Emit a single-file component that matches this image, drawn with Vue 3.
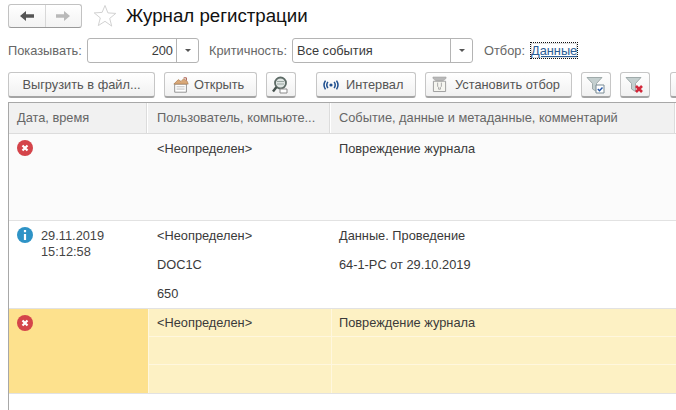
<script setup>
const rows = [
  { kind: 'err', date: [], user: ['<Неопределен>', '', ''], event: ['Повреждение журнала', '', ''] },
  { kind: 'info', date: ['29.11.2019', '15:12:58'], user: ['<Неопределен>', 'DOC1C', '650'], event: ['Данные. Проведение', '64-1-PC от 29.10.2019', ''] },
  { kind: 'err', selected: true, date: [], user: ['<Неопределен>', '', ''], event: ['Повреждение журнала', '', ''] }
]
</script>

<template>
  <div class="page">
    <header class="titlebar">
      <div class="nav">
        <button class="nav-btn">
          <svg width="16" height="12" viewBox="0 0 16 12"><path d="M1 6l6-5v3.2h8v3.6H7V11z" fill="#555"/></svg>
        </button>
        <button class="nav-btn">
          <svg width="16" height="12" viewBox="0 0 16 12"><path d="M15 6L9 1v3.2H1v3.6h8V11z" fill="#b9b9b9"/></svg>
        </button>
      </div>
      <svg class="star" width="24" height="24" viewBox="0 0 24 24"><path d="M12 1.500l2.900 7.400 7.900.5-6.100 5 2 7.700L12 17.300l-6.700 4.300 2-7.700-6.100-5 7.900-.5z" fill="#fff" stroke="#d2d2d2"/></svg>
      <h1 class="title">Журнал регистрации</h1>
    </header>

    <div class="filters">
      <span class="lbl lbl-show">Показывать:</span>
      <div class="combo combo-count">
        <span class="val right">200</span>
        <span class="drop"><i class="caret"></i></span>
      </div>
      <span class="lbl crit">Критичность:</span>
      <div class="combo combo-crit">
        <span class="val">Все события</span>
        <span class="drop"><i class="caret"></i></span>
      </div>
      <span class="lbl sel">Отбор:</span>
      <a class="link">Данные</a>
    </div>

    <div class="toolbar">
      <button class="btn w-export">Выгрузить в файл...</button>
      <button class="btn w-open">
        <svg width="18" height="18" viewBox="0 0 20 18">
          <path d="M3 8h13v9H3z" fill="#fff" stroke="#8a8a8a"/>
          <path d="M5 11h9M5 13.500h9" stroke="#b5b5b5"/>
          <path d="M2 8l5-5 3 2 3-3 4 3 1 3H2z" fill="#d9a878" stroke="#a8794e" stroke-width=".7"/>
          <path d="M13 1h3v3" fill="none" stroke="#a34a3a"/>
        </svg>
        Открыть
      </button>
      <button class="btn w-icon">
        <svg width="20" height="20" viewBox="0 0 20 20">
          <circle cx="9.500" cy="8" r="5.500" fill="#dfe5e3" stroke="#5d6b66" stroke-width="1.800"/>
          <path d="M6 6.500h7M6 9h7" stroke="#9aa7a2"/>
          <path d="M5.500 12L2 16.500" stroke="#46524e" stroke-width="2.400"/>
          <path d="M9 14h7v4H9z" fill="#fff" stroke="#8b8b8b"/>
        </svg>
      </button>
      <button class="btn w-interval gap-left">
        <svg width="16" height="12" viewBox="0 0 18 12">
          <circle cx="9" cy="6" r="1.800" fill="#1f4f8f"/>
          <path d="M5.500 2.500a6 6 0 0 0 0 7M12.500 2.500a6 6 0 0 1 0 7" fill="none" stroke="#1f4f8f" stroke-width="1.700"/>
          <path d="M2.800 1a9 9 0 0 0 0 10M15.200 1a9 9 0 0 1 0 10" fill="none" stroke="#1f4f8f" stroke-width="1.700"/>
        </svg>
        Интервал
      </button>
      <button class="btn w-setsel">
        <svg width="15" height="17" viewBox="0 0 16 18">
          <path d="M1 1h14v1.500l-4 3H5l-4-3z" fill="#b9b9b9" stroke="#a0a0a0" stroke-width=".6"/>
          <path d="M1.500 5.500h13v11h-13z" fill="#f5f5f0" stroke="#9b9b9b"/>
          <path d="M6 7v4l1 1v2h2v-2l1-1V7" fill="none" stroke="#a5a5a5"/>
        </svg>
        Установить отбор
      </button>
      <button class="btn w-icon">
        <svg width="20" height="20" viewBox="0 0 20 20">
          <path d="M1 2.500h15l-5.500 6v8l-4-2.500V8.500z" fill="#c4cfcf" stroke="#8f9c9c" stroke-width=".8"/>
          <path d="M10 10h8v8h-8z" fill="#fff" stroke="#7a8c95"/>
          <path d="M11.800 14l1.700 1.800 3-3.300" fill="none" stroke="#2456a8" stroke-width="1.400"/>
        </svg>
      </button>
      <button class="btn w-icon">
        <svg width="20" height="20" viewBox="0 0 20 20">
          <path d="M1 2.500h15l-5.500 6v8l-4-2.500V8.500z" fill="#c4cfcf" stroke="#8f9c9c" stroke-width=".8"/>
          <path d="M11 11l6 6M17 11l-6 6" stroke="#d3283a" stroke-width="2.600"/>
        </svg>
      </button>
      <button class="btn w-next gap-left"></button>
    </div>

    <section class="table">
      <div class="thead">
        <div class="th">Дата, время</div>
        <div class="th th-user">Пользователь, компьюте...</div>
        <div class="th">Событие, данные и метаданные, комментарий</div>
      </div>
      <div v-for="(r, i) in rows" :key="i" class="row" :class="{ selected: r.selected, first: i === 0, second: i === 1 }">
        <div class="cell date">
          <svg v-if="r.kind === 'err'" class="ico" width="16" height="16" viewBox="0 0 16 16">
            <circle cx="8" cy="8" r="8" fill="#d4444a"/>
            <path d="M5.500 5.500l5 5M10.500 5.500l-5 5" stroke="#fff" stroke-width="2.200"/>
          </svg>
          <svg v-else class="ico" width="16" height="16" viewBox="0 0 16 16">
            <circle cx="8" cy="8" r="8" fill="#2e93c6"/>
            <path d="M8 3v2.200M8 7v6" stroke="#fff" stroke-width="2.200"/>
          </svg>
          <div class="dt">
            <div v-for="d in r.date" :key="d">{{ d }}</div>
          </div>
        </div>
        <div class="cell stack user">
          <div v-for="(u, j) in r.user" :key="j" class="line">{{ u }}</div>
        </div>
        <div class="cell stack event">
          <div v-for="(e, j) in r.event" :key="j" class="line">{{ e }}</div>
        </div>
      </div>
    </section>
  </div>
</template>

<style>
html, body { margin: 0; overflow: hidden; background: #fff; }
</style>

<style scoped>
.page {
  width: 676px;
  height: 410px;
  overflow: hidden;
  background: #fff;
  font-family: "Liberation Sans", Arial, sans-serif;
  font-size: 12.8px;
  color: #3a3a3a;
  box-sizing: border-box;
  padding-top: 4px;
}
button { font: inherit; color: #555; margin: 0; }

.titlebar { display: flex; align-items: center; height: 24px; padding-left: 8px; }
.nav {
  display: flex;
  width: 74px;
  height: 24px;
  box-sizing: border-box;
  border: 1px solid #c2c2c2;
  border-bottom-color: #999;
  border-radius: 3px;
  background: linear-gradient(#fff, #f3f3f3);
}
.nav-btn {
  flex: 1;
  border: 0;
  padding: 0;
  background: none;
  display: flex;
  align-items: center;
  justify-content: center;
}
.nav-btn + .nav-btn { border-left: 1px solid #d8d8d8; }
.star { margin-left: 11px; flex: none; }
.title {
  margin: 0 0 0 9px;
  font-size: 18.7px;
  font-weight: 400;
  color: #111;
  line-height: 24px;
  white-space: nowrap;
}

.filters { display: flex; align-items: center; height: 25px; margin-top: 10px; padding-left: 8px; color: #666; }
.lbl-show { width: 79px; flex: none; white-space: nowrap; }
.combo {
  display: flex;
  height: 25px;
  flex: none;
  box-sizing: border-box;
  border: 1px solid #b4b4b4;
  border-radius: 3px;
  color: #3a3a3a;
  background: #fff;
}
.combo-count { width: 112px; }
.combo-crit { width: 181px; margin-left: 0; }
.val { flex: 1; line-height: 23px; padding: 0 3px 0 4px; white-space: nowrap; }
.right { text-align: right; }
.drop {
  width: 21px;
  flex: none;
  border-left: 1px solid #b4b4b4;
  display: flex;
  align-items: center;
  justify-content: center;
}
.caret { width: 0; height: 0; border: 3px solid transparent; border-top: 3px solid #555; border-bottom: 0; }
.crit { margin-left: 10px; width: 83px; flex: none; white-space: nowrap; }
.sel { margin-left: 11px; width: 47px; flex: none; }
.link {
  color: #2a5c94;
  text-decoration: underline;
  outline: 1px dotted #111;
  box-shadow: inset 0 0 0 1px rgba(0, 0, 0, .12);
  line-height: 15px;
}

.toolbar { display: flex; gap: 9px; height: 26px; margin-top: 9px; padding-left: 8px; width: 720px; }
.btn {
  flex: none;
  height: 26px;
  box-sizing: border-box;
  border: 1px solid #c6c6c6;
  border-bottom: 2px solid #a5a5a5;
  border-radius: 3px;
  background: linear-gradient(#fff, #f1f1f1);
  padding: 0;
  display: flex;
  align-items: center;
  justify-content: center;
  gap: 6px;
  white-space: nowrap;
}
.w-export { width: 147px; }
.w-open { width: 93px; justify-content: flex-start; padding-left: 7px; gap: 4px; }
.w-icon { width: 30px; }
.w-interval { width: 100px; justify-content: flex-start; padding-left: 6px; gap: 7px; }
.w-setsel { width: 147px; justify-content: flex-start; padding-left: 6px; gap: 8px; }
.w-next { width: 30px; }
.gap-left { margin-left: 11px; }

.table {
  margin: 4px 0 0 8px;
  height: 400px;
  box-sizing: border-box;
  border-left: 1px solid #a8a8a8;
  border-top: 1px solid #a8a8a8;
}
.thead, .row { display: grid; grid-template-columns: 139px 183px 1fr; }
.thead { height: 31px; background: #f1f1f1; border-bottom: 1px solid #dcdcdc; color: #666; box-sizing: border-box; }
.th {
  line-height: 29px;
  padding-left: 8px;
  border-right: 1px solid #fff;
  box-shadow: inset -1px 0 0 #dcdcdc;
  white-space: nowrap;
}
.th-user { padding-left: 9px; }
.row { height: 85px; box-sizing: border-box; border-bottom: 1px solid #e2e2e2; background: #fff; }
.row.first { height: 87px; background: #fbfbfb; }
.row.second { height: 88px; }
.cell { min-width: 0; }
.date { display: flex; padding: 6px 0 0 8px; }
.ico { flex: none; }
.dt { margin: 1px 0 0 8px; color: #444; line-height: 16px; }
.stack { display: flex; flex-direction: column; }
.line { height: 29px; flex: none; line-height: 30px; padding-left: 8px; box-sizing: border-box; white-space: nowrap; }
.user .line { padding-left: 9px; }
.row.selected { background: #fdf1c4; }
.row.selected .date { background: #fde18d; }
.row.selected .cell + .cell { border-left: 1px solid #fff7de; }
.row.selected .line { border-bottom: 1px solid #fff7de; height: 28px; line-height: 28px; }
.row.selected .user .line { padding-left: 8px; }
.row.selected .event .line { padding-left: 7px; }
.row.selected .line:last-child { border-bottom: 0; }
</style>
